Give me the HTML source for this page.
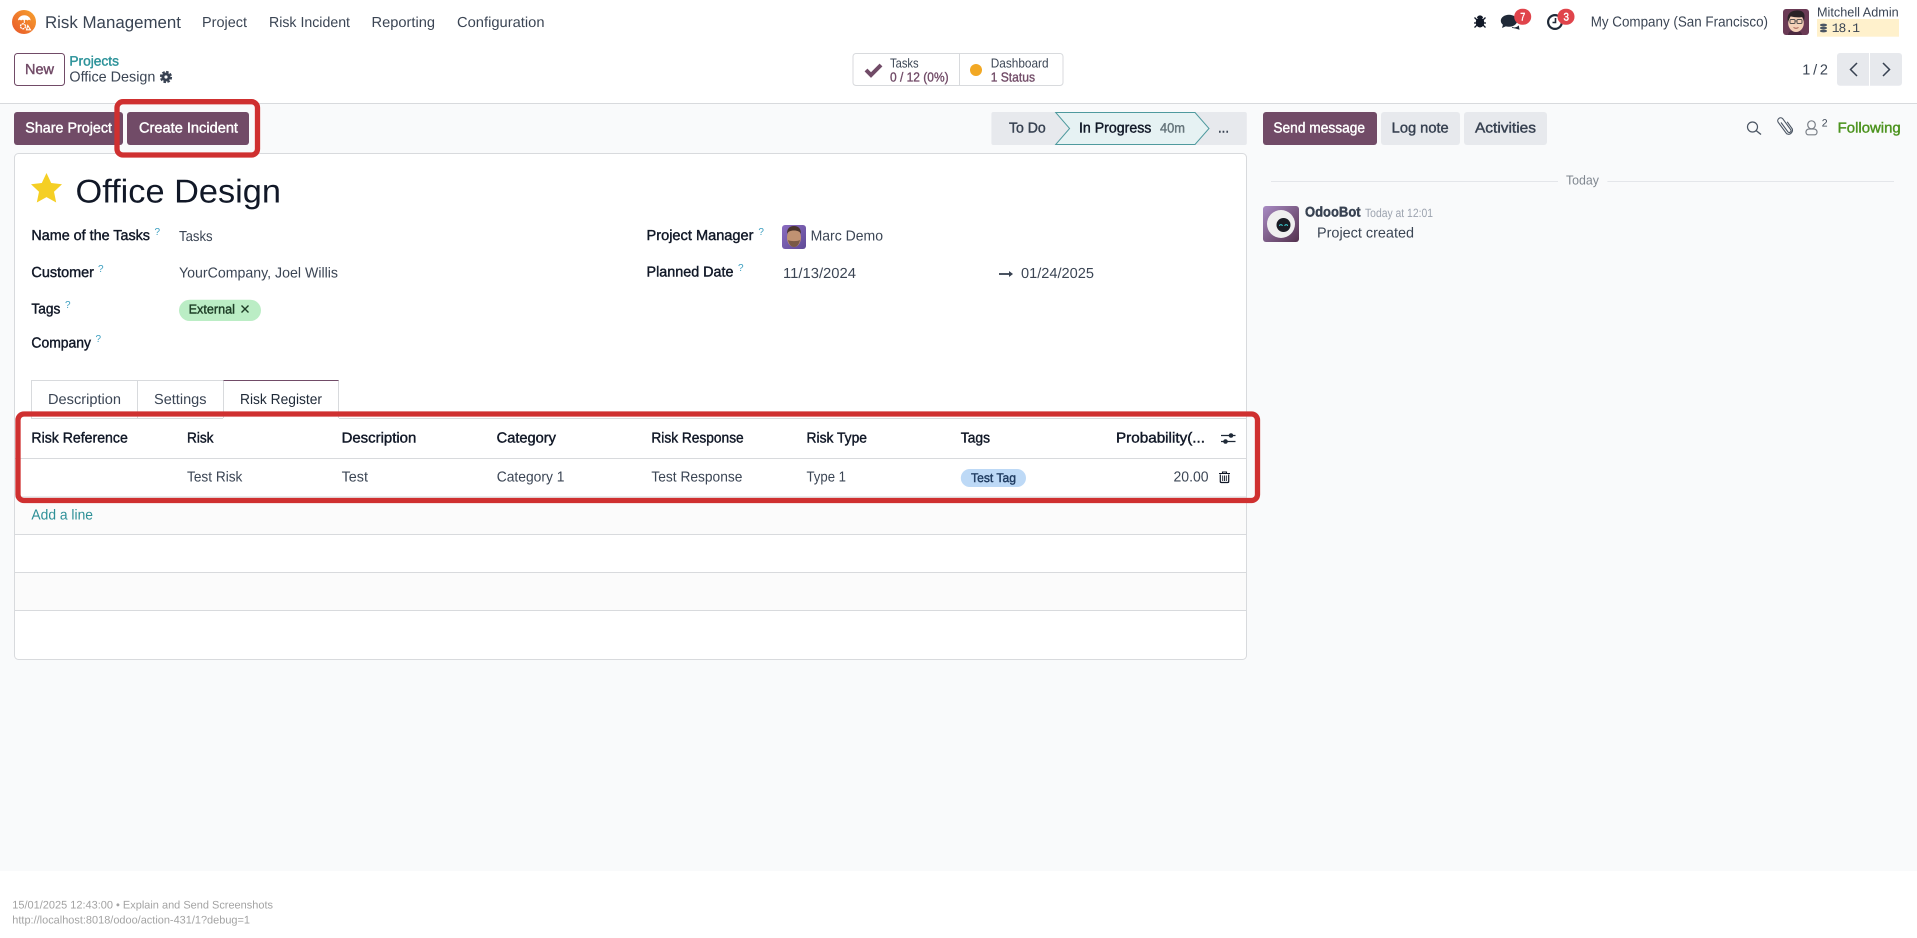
<!DOCTYPE html>
<html lang="en">
<head>
<meta charset="utf-8">
<title>Office Design - Risk Management</title>
<style>
html,body{margin:0;padding:0;width:1917px;height:938px;overflow:hidden;background:#fff}
svg{display:block}
text{font-family:"Liberation Sans",sans-serif;font-size:14.5px;fill:#3b4554;text-rendering:geometricPrecision;white-space:pre}
.m{stroke:currentColor;stroke-width:.42px}
.d{color:#111827;fill:#111827}
.w{color:#fff;fill:#fff}
.p{color:#714b67;fill:#714b67}
.g{color:#374151;fill:#374151}
.q{font-size:10px;fill:#3d9fc0}
.s{font-size:13.5px}
</style>
</head>
<body>
<svg xmlns="http://www.w3.org/2000/svg" width="1917" height="938" viewBox="0 0 1917 938">
<defs>
<linearGradient id="lg" x1="0" y1="1" x2="1" y2="0"><stop offset="0" stop-color="#e8562a"/><stop offset="1" stop-color="#f7a32e"/></linearGradient>
<linearGradient id="bot" x1="0" y1="0" x2="1" y2="1"><stop offset="0" stop-color="#a98bc4"/><stop offset="1" stop-color="#53314d"/></linearGradient>
<linearGradient id="marc" x1="0" y1="0" x2="1" y2="1"><stop offset="0" stop-color="#8a6cc0"/><stop offset="1" stop-color="#5f4a96"/></linearGradient>
</defs>

<!-- backgrounds -->
<rect x="0" y="0" width="1917" height="938" fill="#fff"/>
<rect x="0" y="103" width="1917" height="768" fill="#f9fafb"/>
<rect x="0" y="103" width="1917" height="1" fill="#d8dadd"/>

<!-- navbar -->
<circle cx="24" cy="22" r="12" fill="url(#lg)"/>
<path d="M18 20.500a6.300 5.200 0 0 1 12.600 0c-1-1-2.100-1-3.100 0-1-1-2.200-1-3.200 0-1-1-2.200-1-3.200 0-1-1-2.100-1-3.100 0z" fill="#fff"/>
<path d="M24.300 20v3" stroke="#fff" stroke-width="1"/>
<circle cx="23" cy="26.300" r="2.500" fill="none" stroke="#fff" stroke-width="1.300" stroke-dasharray="2 .6"/>
<path d="M27.800 25.500l2.700 4.300h-4z" fill="none" stroke="#fff" stroke-width="1.100"/>
<text x="45" y="28" style="font-size:17px" textLength="136" lengthAdjust="spacingAndGlyphs">Risk Management</text>
<text x="202" y="27" textLength="45" lengthAdjust="spacingAndGlyphs">Project</text>
<text x="269" y="27" textLength="81" lengthAdjust="spacingAndGlyphs">Risk Incident</text>
<text x="371.500" y="27" textLength="63.500" lengthAdjust="spacingAndGlyphs">Reporting</text>
<text x="457" y="27" textLength="87.500" lengthAdjust="spacingAndGlyphs">Configuration</text>

<!-- bug -->
<g fill="#111827" stroke="#111827">
<ellipse cx="1480" cy="22.500" rx="4.300" ry="5" stroke="none"/>
<path d="M1477 18a3 2.600 0 0 1 6 0z" stroke="none"/>
<path d="M1474.500 17.500l2.500 2.500M1485.500 17.500l-2.500 2.500M1474 23h3M1486 23h-3M1474.500 27.500l2.500-2.500M1485.500 27.500l-2.500-2.500" stroke-width="1.300" fill="none"/>
</g>
<!-- chat -->
<ellipse cx="1509" cy="20.800" rx="8.200" ry="6" fill="#1f2937"/>
<path d="M1503 24.500l-1 3.500 5-2.300z" fill="#1f2937"/>
<path d="M1512 27.500c3 .8 5 .2 6.500-1.300l.5 3-3-1z" fill="#1f2937" stroke="#1f2937" stroke-width=".8"/>
<rect x="1514.200" y="8.700" width="17" height="16" rx="8" fill="#e0444b"/>
<text x="1520.200" y="20.500" class="w m" style="font-size:11px" textLength="5" lengthAdjust="spacingAndGlyphs">7</text>
<!-- clock -->
<circle cx="1555" cy="22" r="6.900" fill="none" stroke="#1f2937" stroke-width="2.200"/>
<path d="M1555.500 18v4.500h-3" fill="none" stroke="#1f2937" stroke-width="1.600"/>
<rect x="1557.500" y="8.700" width="17" height="16" rx="8" fill="#e0444b"/>
<text x="1563.500" y="20.500" class="w m" style="font-size:11px" textLength="5.500" lengthAdjust="spacingAndGlyphs">3</text>

<text x="1590.700" y="26.700" textLength="177.300" lengthAdjust="spacingAndGlyphs">My Company (San Francisco)</text>

<!-- Mitchell avatar -->
<rect x="1783" y="9" width="26" height="26" rx="3" fill="#6a3a55"/>
<path d="M1788 35c.5-3 2-4 4-4.500h6c2 .5 3.500 1.500 4 4.500z" fill="#4c2a40"/>
<ellipse cx="1796" cy="23" rx="7.800" ry="9" fill="#f4d0b8"/>
<path d="M1788 22c-1.500-6 1-11 8-11.500 5-.5 9 1.500 8.500 6.500l-.5 4.500-1.200-4.500c-3 .6-8 .5-12.300-.6z" fill="#2a2226"/>
<g fill="none" stroke="#55504f" stroke-width="1"><rect x="1790" y="19.500" width="5" height="4" rx="1"/><rect x="1797" y="19.500" width="5" height="4" rx="1"/><path d="M1795 21h2"/></g>
<path d="M1793.500 27.500q2.500 1.500 5 0" fill="none" stroke="#a0564c" stroke-width="1"/>

<text x="1817" y="16.700" style="font-size:13px" textLength="81.700" lengthAdjust="spacingAndGlyphs">Mitchell Admin</text>
<rect x="1817" y="19" width="82" height="17.700" fill="#fff1cc"/>
<g fill="#4b5563"><ellipse cx="1823.500" cy="25" rx="3.600" ry="1.400"/><ellipse cx="1823.500" cy="28" rx="3.600" ry="1.400"/><ellipse cx="1823.500" cy="31" rx="3.600" ry="1.400"/></g>
<text x="1831.700" y="32" style="font-family:'Liberation Mono',monospace;font-size:13px" textLength="28.300" lengthAdjust="spacing">18.1</text>

<!-- control panel -->
<rect x="14.500" y="53.500" width="50" height="32" rx="3" fill="#fff" stroke="#714b67"/>
<text x="25" y="74" class="p m" textLength="29" lengthAdjust="spacingAndGlyphs">New</text>
<text x="69.400" y="65.700" class="s m" style="fill:#2d939a;color:#2d939a" textLength="49.600" lengthAdjust="spacingAndGlyphs">Projects</text>
<text x="69.400" y="81.700" textLength="86" lengthAdjust="spacingAndGlyphs">Office Design</text>
<circle cx="166" cy="77" r="4.500" fill="#374151"/>
<circle cx="166" cy="77" r="5.200" fill="none" stroke="#374151" stroke-width="1.800" stroke-dasharray="2.600 1.480"/>
<circle cx="166" cy="77" r="1.600" fill="#fff"/>

<rect x="853" y="53.500" width="210" height="32" rx="3" fill="#fff" stroke="#d8dadd"/>
<rect x="959" y="54" width="1" height="31" fill="#d8dadd"/>
<path d="M866 70l5 5 10-10" fill="none" stroke="#714b67" stroke-width="4"/>
<text x="890" y="67.700" style="font-size:13px" textLength="28.600" lengthAdjust="spacingAndGlyphs">Tasks</text>
<text x="890" y="81.300" class="p" style="font-size:13px;stroke:#714b67;stroke-width:.35px" textLength="58.600" lengthAdjust="spacingAndGlyphs">0 / 12 (0%)</text>
<circle cx="976" cy="70" r="6" fill="#f2a824"/>
<text x="990.700" y="67.700" style="font-size:13px" textLength="57.900" lengthAdjust="spacingAndGlyphs">Dashboard</text>
<text x="990.700" y="81.300" class="p" style="font-size:13px;stroke:#714b67;stroke-width:.35px" textLength="44.300" lengthAdjust="spacingAndGlyphs">1 Status</text>

<text x="1802.300" y="74.300" textLength="25.700" lengthAdjust="spacing">1 / 2</text>
<path d="M1837 56a3 3 0 0 1 3-3h29v32.700h-29a3 3 0 0 1-3-3z" fill="#e7e9ed"/>
<path d="M1870 53h29a3 3 0 0 1 3 3v26.700a3 3 0 0 1-3 3h-29z" fill="#e7e9ed"/>
<path d="M1857 63l-6.500 6.500 6.500 6.500M1883 63l6.500 6.500-6.500 6.500" fill="none" stroke="#374151" stroke-width="1.500"/>

<!-- action row -->
<rect x="14" y="112" width="109" height="33" rx="3" fill="#714b67"/>
<text x="25.300" y="132.700" class="w m" textLength="86.700" lengthAdjust="spacingAndGlyphs">Share Project</text>
<rect x="127" y="112" width="122" height="33" rx="3" fill="#714b67"/>
<text x="139" y="132.700" class="w m" textLength="99" lengthAdjust="spacingAndGlyphs">Create Incident</text>

<rect x="991.400" y="112" width="255.400" height="33" rx="2" fill="#e7e9ed"/>
<text x="1009" y="132.700" class="g m" textLength="36.700" lengthAdjust="spacingAndGlyphs">To Do</text>
<path d="M1055.700 112.500H1195L1209 128.500L1195 144.500H1055.700L1069.600 128.500z" fill="#e6f2f3" stroke="#4f9a9e"/>
<text x="1079" y="132.700" class="d m" textLength="72.400" lengthAdjust="spacingAndGlyphs">In Progress</text>
<text x="1160" y="132.700" class="m" style="fill:#66757b;color:#66757b;font-size:13.500px" textLength="25" lengthAdjust="spacingAndGlyphs">40m</text>
<text x="1218" y="132.700" class="g m" textLength="11" lengthAdjust="spacingAndGlyphs">...</text>

<rect x="1263" y="112" width="114" height="33" rx="3" fill="#714b67"/>
<text x="1273.400" y="132.700" class="w m" textLength="91.600" lengthAdjust="spacingAndGlyphs">Send message</text>
<rect x="1381" y="112" width="79" height="33" rx="3" fill="#e7e9ed"/>
<text x="1391.700" y="132.700" class="g m" textLength="57" lengthAdjust="spacingAndGlyphs">Log note</text>
<rect x="1464" y="112" width="83" height="33" rx="3" fill="#e7e9ed"/>
<text x="1475" y="132.700" class="g m" textLength="61" lengthAdjust="spacingAndGlyphs">Activities</text>

<!-- chatter icons -->
<circle cx="1752.500" cy="127" r="5" fill="none" stroke="#4b5563" stroke-width="1.200"/>
<path d="M1756 130.500l5 4" stroke="#4b5563" stroke-width="1.400"/>
<path d="M1781 122.500l7 9.500a1.800 1.800 0 0 0 2.800-2.200l-8-11a2.900 2.900 0 0 0-4.600 3.500l8.500 11.500a4 4 0 0 0 5.500-5l-5-7" fill="none" stroke="#4b5563" stroke-width="1.100"/>
<ellipse cx="1811.500" cy="124.800" rx="3.800" ry="4" fill="none" stroke="#7a7f87" stroke-width="1.200"/>
<path d="M1806 132.500a3 3 0 0 1 3-3.500h5a3 3 0 0 1 3 3.500 2.500 2.500 0 0 1-2.500 2.300h-6a2.500 2.500 0 0 1-2.500-2.300z" fill="none" stroke="#7a7f87" stroke-width="1.200"/>
<text x="1821.700" y="126.700" style="font-size:10.500px">2</text>
<text x="1837.700" y="132.700" class="m" style="fill:#4c931e;color:#4c931e" textLength="63" lengthAdjust="spacingAndGlyphs">Following</text>

<!-- sheet -->
<rect x="14.500" y="153.500" width="1232" height="506" rx="4" fill="#fff" stroke="#d8dadd"/>
<path d="M46.500 173l4.700 10 10.800 1.300-8 7.400 2.200 10.800-9.700-5.400-9.700 5.400 2.200-10.800-8-7.400 10.800-1.300z" fill="#f5cf24"/>
<text x="75.500" y="202.300" class="d" style="font-size:33px" textLength="205.500" lengthAdjust="spacingAndGlyphs">Office Design</text>

<text x="31.400" y="240" class="d m" textLength="118.600" lengthAdjust="spacingAndGlyphs">Name of the Tasks</text>
<text x="154.500" y="235" class="q">?</text>
<text x="179" y="241" textLength="33.600" lengthAdjust="spacingAndGlyphs">Tasks</text>
<text x="31.400" y="277" class="d m" textLength="62.600" lengthAdjust="spacingAndGlyphs">Customer</text>
<text x="98" y="272" class="q">?</text>
<text x="179" y="277.700" textLength="159" lengthAdjust="spacingAndGlyphs">YourCompany, Joel Willis</text>
<text x="31.400" y="313.700" class="d m" textLength="29" lengthAdjust="spacingAndGlyphs">Tags</text>
<text x="65" y="308" class="q">?</text>
<rect x="179" y="299.700" width="82" height="21.300" rx="10.650" fill="#bbedc5"/>
<text x="188.600" y="313.700" class="m" style="fill:#1d3d26;color:#1d3d26;font-size:13px" textLength="46.400" lengthAdjust="spacingAndGlyphs">External</text>
<path d="M241.500 305.500l7 7M248.500 305.500l-7 7" stroke="#1d3d26" stroke-width="1.400"/>
<text x="31.400" y="347.700" class="d m" textLength="59.600" lengthAdjust="spacingAndGlyphs">Company</text>
<text x="95.500" y="342" class="q">?</text>

<text x="646.500" y="240" class="d m" textLength="107" lengthAdjust="spacingAndGlyphs">Project Manager</text>
<text x="758.400" y="235" class="q">?</text>
<rect x="782" y="225" width="24" height="24" rx="3" fill="url(#marc)"/>
<ellipse cx="794" cy="237.500" rx="7" ry="9.500" fill="#c09272"/>
<path d="M787 234c0-5.500 2.500-8 7-8s7 2.500 7 8c-1-2.500-3.500-3.500-7-3.500s-6 1-7 3.500z" fill="#4a342c"/>
<path d="M788 240c1 5 3.500 7 6 7s5-2 6-7c-2.500 1.500-9.500 1.500-12 0z" fill="#7a5a46"/>
<text x="810.600" y="240.700" textLength="72.400" lengthAdjust="spacingAndGlyphs">Marc Demo</text>
<text x="646.500" y="276.700" class="d m" textLength="87" lengthAdjust="spacingAndGlyphs">Planned Date</text>
<text x="738" y="271" class="q">?</text>
<text x="783" y="278" textLength="73" lengthAdjust="spacingAndGlyphs">11/13/2024</text>
<path d="M999 274h11" stroke="#374151" stroke-width="1.800"/>
<path d="M1009 271l4 3-4 3z" fill="#374151"/>
<text x="1021" y="278" textLength="73" lengthAdjust="spacingAndGlyphs">01/24/2025</text>

<!-- tabs -->
<path d="M31.500 418V380.500H338.500V418" fill="none" stroke="#d8dadd"/>
<path d="M137.500 380.500V418M223.500 380.500V418" fill="none" stroke="#d8dadd"/>
<path d="M223.500 380.500H338.500" fill="none" stroke="#714b67"/>
<text x="48" y="404" textLength="73" lengthAdjust="spacingAndGlyphs">Description</text>
<text x="154" y="404" textLength="52.500" lengthAdjust="spacingAndGlyphs">Settings</text>
<text x="240" y="404" class="d" style="fill:#1f2937" textLength="82" lengthAdjust="spacingAndGlyphs">Risk Register</text>
<rect x="31" y="418" width="192" height="1" fill="#d8dadd"/>
<rect x="339" y="418" width="907" height="1" fill="#d8dadd"/>

<!-- table -->
<text x="31.400" y="442.700" class="d m" textLength="96.400" lengthAdjust="spacingAndGlyphs">Risk Reference</text>
<text x="187" y="442.700" class="d m" textLength="26.500" lengthAdjust="spacingAndGlyphs">Risk</text>
<text x="341.600" y="442.700" class="d m" textLength="74.700" lengthAdjust="spacingAndGlyphs">Description</text>
<text x="496.700" y="442.700" class="d m" textLength="59.300" lengthAdjust="spacingAndGlyphs">Category</text>
<text x="651.400" y="442.700" class="d m" textLength="92.300" lengthAdjust="spacingAndGlyphs">Risk Response</text>
<text x="806.500" y="442.700" class="d m" textLength="60.500" lengthAdjust="spacingAndGlyphs">Risk Type</text>
<text x="960.800" y="442.700" class="d m" textLength="29.200" lengthAdjust="spacingAndGlyphs">Tags</text>
<text x="1116" y="442.700" class="d m" textLength="89" lengthAdjust="spacingAndGlyphs">Probability(...</text>
<path d="M1221 435.500h14.500M1221 441.500h14.500" stroke="#1f2937" stroke-width="1.200"/>
<circle cx="1231" cy="435.500" r="2.300" fill="#1f2937"/>
<circle cx="1225.500" cy="441.500" r="2.300" fill="#1f2937"/>
<rect x="15" y="458" width="1231" height="1" fill="#d8dadd"/>
<text x="187" y="481.700" textLength="55.400" lengthAdjust="spacingAndGlyphs">Test Risk</text>
<text x="341.600" y="481.700" textLength="26.400" lengthAdjust="spacingAndGlyphs">Test</text>
<text x="496.700" y="481.700" textLength="67.800" lengthAdjust="spacingAndGlyphs">Category 1</text>
<text x="651.400" y="481.700" textLength="91" lengthAdjust="spacingAndGlyphs">Test Response</text>
<text x="806.500" y="481.700" textLength="39.500" lengthAdjust="spacingAndGlyphs">Type 1</text>
<rect x="960.800" y="469" width="65.200" height="18" rx="9" fill="#bdd9f6"/>
<text x="971" y="482" class="m" style="fill:#1e3a5f;color:#1e3a5f;font-size:12.500px" textLength="45" lengthAdjust="spacingAndGlyphs">Test Tag</text>
<text x="1173.500" y="481.700" textLength="35.100" lengthAdjust="spacingAndGlyphs">20.00</text>
<path d="M1219 473.500h11M1222.500 473.500v-1.500h4v1.500" fill="none" stroke="#111827" stroke-width="1.100"/>
<path d="M1220.300 474.500v7a1 1 0 0 0 1 1h6.400a1 1 0 0 0 1-1v-7" fill="none" stroke="#111827" stroke-width="1.200"/>
<path d="M1222.700 475.500v5.500M1224.500 475.500v5.500M1226.300 475.500v5.500" stroke="#111827" stroke-width=".9"/>

<rect x="15" y="497" width="1231" height="37" fill="#fbfbfb"/>
<rect x="15" y="496.500" width="1231" height="1" fill="#d8dadd"/>
<text x="31.400" y="519.700" style="fill:#2e9097" textLength="61.600" lengthAdjust="spacingAndGlyphs">Add a line</text>
<rect x="15" y="534" width="1231" height="1" fill="#d8dadd"/>
<rect x="15" y="573" width="1231" height="37" fill="#fbfbfb"/>
<rect x="15" y="572" width="1231" height="1" fill="#d8dadd"/>
<rect x="15" y="610" width="1231" height="1" fill="#d8dadd"/>

<!-- chatter -->
<rect x="1271" y="181" width="287" height="1" fill="#e4e6ea"/>
<rect x="1607.400" y="181" width="286.600" height="1" fill="#e4e6ea"/>
<text x="1566" y="184.300" style="font-size:13px;fill:#7f868f" textLength="33" lengthAdjust="spacingAndGlyphs">Today</text>
<rect x="1263" y="206" width="36" height="36" rx="3" fill="url(#bot)"/>
<ellipse cx="1281" cy="224" rx="14" ry="14" fill="#efefef"/>
<circle cx="1283.500" cy="225" r="7" fill="#1a1c24"/>
<path d="M1279.500 226a1.400 1.400 0 0 1 2.800 0M1284.800 226a1.400 1.400 0 0 1 2.800 0" fill="none" stroke="#39c5c9" stroke-width="1"/>
<text x="1305" y="216.700" class="g m" style="font-weight:700;font-size:14px" textLength="55.600" lengthAdjust="spacingAndGlyphs">OdooBot</text>
<text x="1365" y="217" style="font-size:12px;fill:#9ca3af" textLength="68" lengthAdjust="spacingAndGlyphs">Today at 12:01</text>
<text x="1317" y="237.700" textLength="97" lengthAdjust="spacingAndGlyphs">Project created</text>

<!-- footer text -->
<text x="12.300" y="908.700" style="font-size:11px;fill:#a3a3a3" textLength="260.700" lengthAdjust="spacingAndGlyphs">15/01/2025 12:43:00 • Explain and Send Screenshots</text>
<text x="12.300" y="923.700" style="font-size:11px;fill:#a3a3a3" textLength="237.700" lengthAdjust="spacingAndGlyphs">http://localhost:8018/odoo/action-431/1?debug=1</text>

<!-- red highlights -->
<rect x="117" y="101.700" width="140.500" height="53.300" rx="6" fill="none" stroke="#cf3030" stroke-width="5.300"/>
<rect x="18" y="414" width="1239.500" height="86.500" rx="6" fill="none" stroke="#cf3030" stroke-width="5.300"/>
</svg>
</body>
</html>
